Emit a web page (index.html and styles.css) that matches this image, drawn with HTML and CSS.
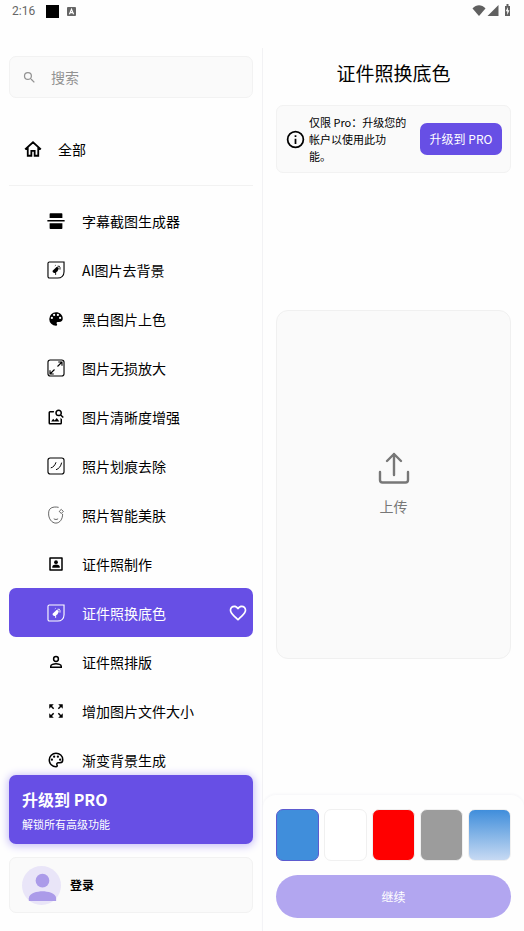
FILE: index.html
```html
<!DOCTYPE html>
<html lang="zh-CN">
<head>
<meta charset="utf-8">
<meta name="viewport" content="width=device-width, initial-scale=1">
<title>证件照换底色</title>
<link rel="stylesheet" href="styles.css">
</head>
<body>
<svg class="defs" aria-hidden="true">
  <symbol id="cutout" viewBox="0 0 24 24">
    <path fill="none" stroke="currentColor" stroke-width="1.500" d="M3.200 1.300H22.700v13c0 5-3.500 8.400-8.500 8.400H3.200a1.900 1.900 0 0 1-1.900-1.900V3.200a1.900 1.900 0 0 1 1.900-1.900z"/>
    <path fill="currentColor" d="M7.500 13l4.500-4.500c1.500-1.300 4.300.2 3.500 2.300l-1.500 2.700-2.700 2.300c-2 1-4.600-.8-3.800-2.800z"/>
    <path fill="none" stroke="currentColor" stroke-width="1.200" d="M11.500 14v4.500M10.500 6.500l1-.8M14 7h2.500l.8 1.500v3"/>
  </symbol>
</svg>
<div class="app">
  <header class="status">
    <span class="clock">2:16</span>
    <span class="block"></span>
    <svg class="badge" viewBox="0 0 10 10"><rect width="10" height="10" rx="1" fill="#666"/><path d="M2.700 8L5 2.500 7.300 8M3.600 6.200h2.800" fill="none" stroke="#fff" stroke-width="1.300"/></svg>
    <svg class="signals" viewBox="0 0 40 14">
      <path fill="#606060" d="M.5 4.500C4.500.3 9.500.3 13.500 4.500L7 12z"/>
      <path fill="#606060" d="M26.500 1v11h-11z"/>
      <path fill="#606060" d="M33 2h1.500V0h2v2H38v10h-5z"/>
      <path fill="#fff" d="M36 3l-2.300 4.300h1.500V11l2.200-4.700h-1.500z"/>
    </svg>
  </header>
  <div class="columns">
    <aside class="sidebar">
      <label class="search">
        <svg viewBox="0 0 24 24"><path fill="currentColor" d="M15.500 14h-.79l-.28-.27A6.470 6.470 0 0 0 16 9.500 6.500 6.500 0 1 0 9.500 16c1.610 0 3.090-.59 4.230-1.570l.27.28v.79l5 4.990L20.490 19l-4.990-5zm-6 0a4.500 4.500 0 1 1 0-9 4.500 4.500 0 0 1 0 9z"/></svg>
        <input type="search" placeholder="搜索" aria-label="搜索">
      </label>
      <a class="home" href="#">
        <svg viewBox="0 0 24 24"><path fill="none" stroke="currentColor" stroke-width="2.400" d="M1.500 12.500L12 3l10.500 9.500M5 10v11h4.800v-6.500h4.400V21H19V10"/></svg>
        <span>全部</span>
      </a>
      <nav class="tools">
        <a class="tool" href="#"><svg viewBox="0 0 24 24"><path fill="currentColor" d="M4.500 1.500h15a1 1 0 0 1 1 1V8h-17V2.500a1 1 0 0 1 1-1zM.5 10.500h23v2H.5zM3.500 15h17v6.500a1 1 0 0 1-1 1h-15a1 1 0 0 1-1-1z"/></svg><span>字幕截图生成器</span></a>
        <a class="tool" href="#"><svg viewBox="0 0 24 24"><use href="#cutout"/></svg><span>AI图片去背景</span></a>
        <a class="tool" href="#"><svg viewBox="0 0 24 24"><path fill="currentColor" d="M12 3a9 9 0 0 0 0 18 1.500 1.500 0 0 0 1.500-1.500c0-.39-.15-.74-.39-1.010-.23-.26-.38-.61-.38-.99a1.500 1.500 0 0 1 1.500-1.500H16a5 5 0 0 0 5-5c0-4.420-4.030-8-9-8zm-5.500 9a1.500 1.500 0 1 1 0-3 1.500 1.500 0 0 1 0 3zm3-4a1.500 1.500 0 1 1 0-3 1.500 1.500 0 0 1 0 3zm5 0a1.500 1.500 0 1 1 0-3 1.500 1.500 0 0 1 0 3zm3 4a1.500 1.500 0 1 1 0-3 1.500 1.500 0 0 1 0 3z"/></svg><span>黑白图片上色</span></a>
        <a class="tool" href="#"><svg viewBox="0 0 24 24"><g fill="none" stroke="currentColor" stroke-width="1.500"><rect x="1.300" y="1.300" width="21.400" height="21.400" rx="3"/><path d="M14 10l6-6M15 4h5v5M10 14l-6 6M4 15v5h5"/></g></svg><span>图片无损放大</span></a>
        <a class="tool" href="#"><svg viewBox="0 0 24 24"><path fill="currentColor" d="M18 13v7H4V6h5.020c.05-.71.220-1.380.480-2H4a2 2 0 0 0-2 2v14a2 2 0 0 0 2 2h14a2 2 0 0 0 2-2v-5l-2-2zm-1.500 5h-11l2.750-3.530 1.960 2.360 2.750-3.540L16.500 18zm2.800-9.110c.44-.7.700-1.510.7-2.390C20 4.010 17.990 2 15.500 2S11 4.010 11 6.500s2.010 4.500 4.490 4.500c.88 0 1.700-.26 2.390-.7L21 13.420 22.420 12 19.300 8.890zM15.500 9a2.500 2.500 0 1 1 0-5 2.500 2.500 0 0 1 0 5z"/></svg><span>图片清晰度增强</span></a>
        <a class="tool" href="#"><svg viewBox="0 0 24 24"><g fill="none" stroke="currentColor" stroke-width="1.500"><rect x="1.300" y="1.300" width="21.400" height="21.400" rx="3"/><path stroke-width="1.300" d="M5 14.500c3.500-.8 5.700-3.500 7-7.500M12 17c4-1.500 6.500-4.500 7.500-9.500"/></g></svg><span>照片划痕去除</span></a>
        <a class="tool" href="#"><svg viewBox="0 0 24 24"><g fill="none" stroke="currentColor" stroke-width=".8"><path d="M15.500 1.800C8 .3 2 2.500 2.200 9.500c-.5 7 4 13.300 9.600 13.300 5.200 0 9.200-5.300 9-12.300M9 17c2 1.300 4 1.300 5.800 0M19 4.500l2.700 2.700L19 10l-2.700-2.800z"/></g></svg><span>照片智能美肤</span></a>
        <a class="tool" href="#"><svg viewBox="0 0 24 24"><path fill="none" stroke="currentColor" stroke-width="2" stroke-linejoin="round" d="M4 4h16v16H4z"/><circle cx="12" cy="9.500" r="2.500" fill="currentColor"/><path fill="currentColor" d="M7 17v-1.500c0-1.800 3-2.700 5-2.700s5 .9 5 2.700V17z"/></svg><span>证件照制作</span></a>
        <a class="tool selected" href="#" aria-current="page"><svg viewBox="0 0 24 24"><use href="#cutout"/></svg><span>证件照换底色</span><svg class="heart" viewBox="0 0 24 24"><path fill="currentColor" d="M16.500 3c-1.740 0-3.410.81-4.500 2.090C10.910 3.810 9.240 3 7.500 3 4.420 3 2 5.420 2 8.500c0 3.780 3.400 6.860 8.550 11.540L12 21.350l1.450-1.320C18.600 15.360 22 12.280 22 8.500 22 5.420 19.580 3 16.500 3zm-4.400 15.550l-.1.100-.1-.1C7.140 14.240 4 11.390 4 8.500 4 6.500 5.500 5 7.500 5c1.540 0 3.040.99 3.570 2.360h1.870C13.460 5.990 14.960 5 16.500 5c2 0 3.500 1.500 3.500 3.500 0 2.890-3.140 5.740-7.900 10.050z"/></svg></a>
        <a class="tool" href="#"><svg viewBox="0 0 24 24"><g fill="none" stroke="currentColor" stroke-width="2"><circle cx="12" cy="8" r="3.200"/><path d="M5 19v-1.500c0-2 4-3.300 7-3.300s7 1.300 7 3.300V19z"/></g></svg><span>证件照排版</span></a>
        <a class="tool" href="#"><svg viewBox="0 0 24 24"><path fill="currentColor" d="M15 3l2.300 2.300-2.890 2.870 1.420 1.420L18.700 6.700 21 9V3zM3 9l2.300-2.300 2.870 2.890 1.420-1.420L6.700 5.300 9 3H3zm6 12l-2.300-2.300 2.890-2.870-1.420-1.420L5.300 17.300 3 15v6zm12-6l-2.300 2.300-2.870-2.890-1.420 1.420 2.890 2.870L15 21h6z"/></svg><span>增加图片文件大小</span></a>
        <a class="tool" href="#"><svg viewBox="0 0 24 24"><path fill="none" stroke="currentColor" stroke-width="2" d="M12 3a9 9 0 0 0 0 18c1.500 0 2-1.200 1.300-2.500-.7-1.500.2-2.700 1.700-2.700h2c2.300 0 4-2 4-4.300C21 6.500 17 3 12 3z"/><g fill="currentColor"><circle cx="6.500" cy="11.500" r="1.500"/><circle cx="9.500" cy="7.500" r="1.500"/><circle cx="14.500" cy="7.500" r="1.500"/><circle cx="17.500" cy="11.500" r="1.500"/></g></svg><span>渐变背景生成</span></a>
      </nav>
      <a class="promo" href="#"><strong>升级到 PRO</strong><span>解锁所有高级功能</span></a>
      <a class="login" href="#">
        <svg viewBox="0 0 40 40"><circle cx="20" cy="20" r="20" fill="#e9e5f8"/><circle cx="21" cy="15" r="7" fill="#ab9be9"/><path fill="#ab9be9" d="M7 36v-3c0-5 9-7 14-7s14 2 14 7v3z"/></svg>
        <span>登录</span>
      </a>
    </aside>
    <main class="workspace">
      <h1>证件照换底色</h1>
      <section class="notice">
        <svg viewBox="0 0 24 24"><path fill="currentColor" d="M11 7h2v2h-2zm0 4h2v6h-2zm1-9a10 10 0 1 0 0 20 10 10 0 0 0 0-20zm0 18a8 8 0 1 1 0-16 8 8 0 0 1 0 16z"/></svg>
        <p>仅限 Pro：升级您的<br>帐户以使用此功<br>能。</p>
        <button type="button">升级到 PRO</button>
      </section>
      <div class="stage">
        <button class="upload" type="button">
          <svg viewBox="0 0 32 32"><g fill="none" stroke="currentColor" stroke-width="2.400" stroke-linecap="round" stroke-linejoin="round"><path d="M16 23V2M9 9l7-7 7 7M2 20v8a2.500 2.500 0 0 0 2.500 2.500h23A2.500 2.500 0 0 0 30 28v-8"/></g></svg>
          <span>上传</span>
        </button>
      </div>
      <footer class="sheet">
        <div class="swatches">
          <button class="swatch blue" type="button" aria-label="蓝色"></button>
          <button class="swatch white" type="button" aria-label="白色"></button>
          <button class="swatch red" type="button" aria-label="红色"></button>
          <button class="swatch gray" type="button" aria-label="灰色"></button>
          <button class="swatch gradient" type="button" aria-label="渐变蓝"></button>
        </div>
        <button class="continue" type="button">继续</button>
      </footer>
    </main>
  </div>
</div>
</body>
</html>
```
FILE: styles.css
```css
* { box-sizing: border-box; }
body {
  margin: 0;
  background: #fefefe;
  color: #000;
  font-family: "Noto Sans CJK SC", sans-serif;
  font-size: 14px;
  line-height: 20px;
}
a { color: inherit; text-decoration: none; }
button, input { font: inherit; color: inherit; padding: 0; border: 0; }
svg { display: block; flex: none; }
.defs { position: absolute; width: 0; height: 0; }
.app { display: flex; flex-direction: column; height: 100vh; }

.status {
  display: flex;
  align-items: center;
  flex: none;
  height: 48px;
  padding: 0 12px 26px;
  color: #666;
  font: 12px/20px Roboto, sans-serif;
}
.block { width: 13px; height: 13px; margin-left: 11px; background: #000; }
.badge { width: 9px; height: 9px; margin-left: 8px; }
.signals { width: 40px; height: 14px; margin-left: auto; }

.columns { display: grid; grid-template-columns: 1fr 1fr; flex: 1; min-height: 0; }
.sidebar { display: flex; flex-direction: column; min-height: 0; padding: 8px 9px 18px; }
.search {
  display: flex;
  align-items: center;
  flex: none;
  gap: 14px;
  height: 42px;
  padding: 0 12px;
  border: 1px solid #f2f2f2;
  border-radius: 7px;
  background: #fafafa;
  color: #929292;
}
.search svg { width: 15px; height: 15px; }
.search input { flex: 1; min-width: 0; background: none; outline: 0; }
.search input::placeholder { color: #929292; opacity: 1; }
.home {
  display: flex;
  align-items: center;
  flex: none;
  gap: 16px;
  height: 88px;
  padding: 14px 15px 0;
  border-bottom: 1px solid #f2f2f2;
}
.home svg { width: 18px; height: 18px; }
.tools { flex: 1; min-height: 0; margin-top: 10px; overflow: hidden; }
.tool {
  display: flex;
  align-items: center;
  gap: 17px;
  height: 49px;
  padding: 0 5px 0 38px;
  border-radius: 7px;
}
.tool svg { width: 18px; height: 18px; }
.tool.selected { background: #674fe5; color: #fff; }
.tool .heart { width: 20px; height: 20px; margin-left: auto; }
.promo {
  display: flex;
  flex-direction: column;
  justify-content: center;
  flex: none;
  gap: 4px;
  height: 69px;
  padding: 0 13px;
  border-radius: 7px;
  background: #674fe5;
  box-shadow: 0 1px 8px 1px #c4bbf7;
  color: #fff;
  position: relative;
}
.promo strong { font-size: 16px; line-height: 24px; }
.promo span { font-size: 11px; line-height: 18px; }
.login {
  display: flex;
  align-items: center;
  flex: none;
  gap: 9px;
  height: 56px;
  margin-top: 13px;
  padding: 0 12px;
  border: 1px solid #f2f2f2;
  border-radius: 7px;
  background: #fafafa;
  font-size: 12px;
  font-weight: 700;
}
.login svg { width: 39px; height: 39px; }

.workspace { display: flex; flex-direction: column; min-width: 0; border-left: 1px solid #f2f2f4; }
h1 { margin: 8px 0 16px; font-size: 19px; font-weight: 400; line-height: 33px; text-align: center; }
.notice {
  display: flex;
  align-items: center;
  margin: 0 13px;
  min-height: 68px;
  padding: 0 8px 0 8px;
  border: 1px solid #f2f2f2;
  border-radius: 7px;
  background: #fafafa;
}
.notice svg { width: 21px; height: 21px; }
.notice p { flex: 1; margin: 0 0 0 3px; font-size: 11px; line-height: 17px; white-space: nowrap; }
.notice button {
  flex: none;
  width: 82px;
  height: 32px;
  border-radius: 7px;
  background: #674fe5;
  color: #fff;
  font-size: 12px;
}
.stage { display: flex; align-items: center; flex: 1; min-height: 0; padding: 0 13px; }
.upload {
  display: flex;
  flex-direction: column;
  align-items: center;
  justify-content: center;
  gap: 12px;
  width: 100%;
  aspect-ratio: 235 / 349;
  border: 1px solid #f0f0f0;
  border-radius: 12px;
  background: #fafafa;
  color: #777;
}
.upload svg { width: 32px; height: 32px; }
.sheet {
  flex: none;
  padding: 14px 13px 13px;
  border-radius: 13px 13px 0 0;
  background: #fefefe;
  box-shadow: 0 -1px 3px #f5f5f8;
}
.swatches { display: grid; grid-template-columns: repeat(5, 1fr); gap: 5px; }
.swatch { height: 52px; border: 1px solid #f0f0f0; border-radius: 7px; }
.blue { background: #408edb; border-color: #5c5bcf; }
.white { background: #fff; }
.red { background: #f00; }
.gray { background: #9c9c9c; }
.gradient { background: linear-gradient(#408edb, #c7daf3); }
.continue {
  display: block;
  width: 100%;
  height: 43px;
  margin-top: 14px;
  border-radius: 22px;
  background: #b2a6f0;
  color: #fff;
  font-size: 12px;
}
```
